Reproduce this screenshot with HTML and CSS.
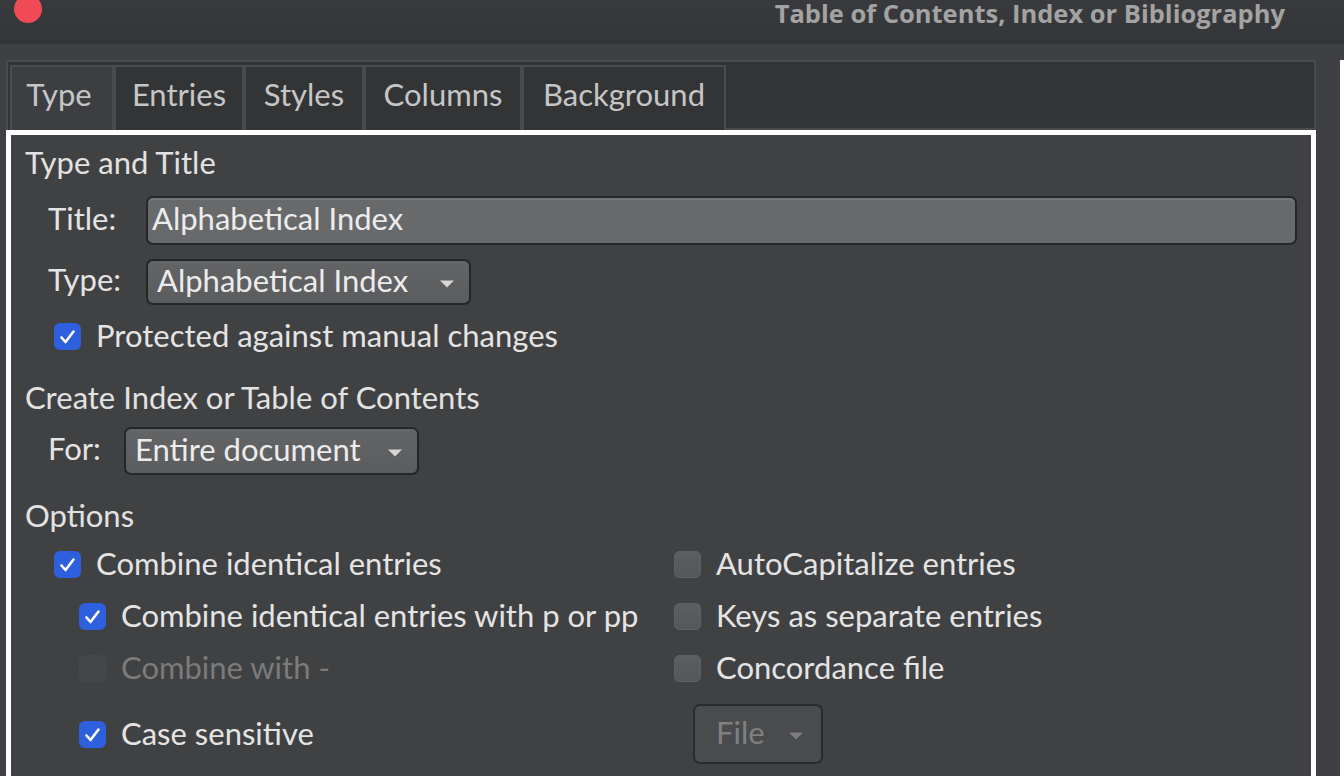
FILE: index.html
```html
<!DOCTYPE html>
<html>
<head>
<meta charset="utf-8">
<link rel="stylesheet" href="styles.css">
</head>
<body>
<div class="titlebar">
  <span class="close"></span>
  <span class="wintitle">Table of Contents, Index or Bibliography</span>
</div>
<div class="main">
  <div class="dialog">
    <div class="tabbar">
      <div class="tab tab-type active">Type</div>
      <div class="tab tab-entries">Entries</div>
      <div class="tab tab-styles">Styles</div>
      <div class="tab tab-columns">Columns</div>
      <div class="tab tab-bg">Background</div>
    </div>
    <div class="panel">
      <div class="heading h-type">Type and Title</div>
      <div class="formrow row-title">
        <span class="label label-wide">Title:</span>
        <div class="entry">Alphabetical Index</div>
      </div>
      <div class="formrow row-type">
        <span class="label label-wide">Type:</span>
        <div class="combo combo-type"><span>Alphabetical Index</span><svg class="arrow" width="16" height="8" viewBox="0 0 16 8"><path d="M1 0.5 H15 L8 7.5 Z" fill="#d6d6d6"/></svg></div>
      </div>
      <div class="check-row row-protect">
        <span class="cb checked"><svg width="27" height="27" viewBox="0 0 27 27"><path d="M7.5 14.5 L11.5 19 L19.5 8.5" fill="none" stroke="#fff" stroke-width="2.6" stroke-linecap="round" stroke-linejoin="round"/></svg></span>
        <span class="cb-text">Protected against manual changes</span>
      </div>
      <div class="heading h-create">Create Index or Table of Contents</div>
      <div class="formrow row-for">
        <span class="label label-narrow">For:</span>
        <div class="combo combo-for"><span>Entire document</span><svg class="arrow" width="16" height="8" viewBox="0 0 16 8"><path d="M1 0.5 H15 L8 7.5 Z" fill="#d6d6d6"/></svg></div>
      </div>
      <div class="heading h-options">Options</div>
      <div class="options">
        <div class="check-row">
          <span class="cb checked"><svg width="27" height="27" viewBox="0 0 27 27"><path d="M7.5 14.5 L11.5 19 L19.5 8.5" fill="none" stroke="#fff" stroke-width="2.6" stroke-linecap="round" stroke-linejoin="round"/></svg></span>
          <span class="cb-text">Combine identical entries</span>
        </div>
        <div class="check-row">
          <span class="cb"></span>
          <span class="cb-text">AutoCapitalize entries</span>
        </div>
        <div class="check-row sub">
          <span class="cb checked"><svg width="27" height="27" viewBox="0 0 27 27"><path d="M7.5 14.5 L11.5 19 L19.5 8.5" fill="none" stroke="#fff" stroke-width="2.6" stroke-linecap="round" stroke-linejoin="round"/></svg></span>
          <span class="cb-text">Combine identical entries with p or pp</span>
        </div>
        <div class="check-row">
          <span class="cb"></span>
          <span class="cb-text">Keys as separate entries</span>
        </div>
        <div class="check-row sub disabled">
          <span class="cb"></span>
          <span class="cb-text">Combine with -</span>
        </div>
        <div class="check-row">
          <span class="cb"></span>
          <span class="cb-text">Concordance file</span>
        </div>
        <div class="check-row sub">
          <span class="cb checked"><svg width="27" height="27" viewBox="0 0 27 27"><path d="M7.5 14.5 L11.5 19 L19.5 8.5" fill="none" stroke="#fff" stroke-width="2.6" stroke-linecap="round" stroke-linejoin="round"/></svg></span>
          <span class="cb-text">Case sensitive</span>
        </div>
        <div class="file-cell">
          <div class="combo combo-file"><span>File</span><svg class="arrow" width="16" height="8" viewBox="0 0 16 8"><path d="M1 0.5 H15 L8 7.5 Z" fill="#7c7d7f"/></svg></div>
        </div>
      </div>
    </div>
  </div>
  <div class="gutter"></div>
  <div class="edge"></div>
</div>
</body>
</html>
```

FILE: styles.css
```css
* { box-sizing: border-box; }
html, body {
  margin: 0;
  padding: 0;
  width: 1344px;
  height: 776px;
  overflow: hidden;
  background: #3f4043;
  font-family: Lato, "Open Sans", sans-serif;
  font-size: 31px;
  color: #e4e4e4;
}

.titlebar {
  height: 44px;
  background: linear-gradient(#393a3d, #343538);
  display: flex;
  align-items: flex-start;
  justify-content: space-between;
}
.close {
  width: 28px;
  height: 28px;
  margin-top: -5px;
  margin-left: 14px;
  border-radius: 50%;
  background: #f04a54;
}
.wintitle {
  font-family: "Open Sans", sans-serif;
  font-weight: 700;
  font-size: 25.5px;
  line-height: 27px;
  color: #a3a3a3;
  margin-right: 59px;
  margin-top: 0;
}

.main {
  display: flex;
  height: 732px;
}
.dialog {
  margin-left: 6px;
  width: 1310px;
  padding-top: 16px;
  display: flex;
  flex-direction: column;
}
.gutter { width: 24px; }
.edge {
  width: 4px;
  margin-top: 16px;
  background: #ffffff;
}

.tabbar {
  height: 70px;
  border: 2px solid #4a4b4d;
  border-bottom: none;
  background: #333436;
  padding: 3px 0 0 2px;
  display: flex;
}
.tabbar::after {
  content: "";
  flex: 1;
  border-bottom: 2px solid #4a4b4d;
}
.tab {
  border: 2px solid #4a4b4d;
  border-bottom: none;
  background: #333436;
  color: #c6c6c6;
  font-size: 31px;
  display: flex;
  align-items: center;
  justify-content: center;
  padding-bottom: 10px;
}
.tab.active { background: #3d3e41; }
.tab-type { width: 104px; padding-right: 6px; }
.tab-entries { width: 130px; }
.tab-styles { width: 120px; }
.tab-columns { width: 158px; }
.tab-bg { width: 204px; }

.panel {
  flex: 1;
  border: 5px solid #ffffff;
  border-bottom: none;
  background: #404143;
  padding: 11px 14px 0 14px;
}

.heading {
  height: 34px;
  line-height: 32px;
  color: #e2e2e2;
}
.h-create { margin-top: 29px; }
.h-options { margin-top: 24px; }

.formrow {
  display: flex;
  align-items: center;
  padding-left: 23px;
}
.row-title { margin-top: 16px; height: 49px; }
.row-type { margin-top: 14px; height: 46px; }
.row-for { margin-top: 12px; height: 48px; }

.label { flex: none; color: #e4e4e4; padding-bottom: 6px; }
.label-wide { width: 98px; }
.label-narrow { width: 76px; }

.entry {
  flex: 1;
  height: 49px;
  border: 2px solid #252628;
  border-radius: 7px;
  background: #68696b;
  box-shadow: inset 0 2px 0 #76777a;
  padding: 0 0 6px 4px;
  display: flex;
  align-items: center;
  color: #ececec;
}

.combo {
  height: 100%;
  border: 2px solid #252628;
  border-radius: 7px;
  background: linear-gradient(#636466, #5b5c5e);
  display: flex;
  align-items: center;
  justify-content: space-between;
  padding: 0 14px 5px 9px;
  color: #ececec;
}
.combo .arrow { flex: none; margin-top: 8px; }
.combo-type { width: 325px; }
.combo-for { width: 295px; }
.combo-file {
  width: 130px;
  height: 60px;
  background: #4a4b4d;
  color: #7f8082;
  padding: 0 17px 5px 21px;
  border-color: #2a2b2d;
}

.check-row {
  display: flex;
  align-items: center;
  height: 32px;
}
.row-protect { margin-top: 15px; padding-left: 29px; }
.cb {
  flex: none;
  width: 27px;
  height: 27px;
  border-radius: 6px;
  background: linear-gradient(#5d5e60, #555658);
  box-shadow: inset 0 0 0 1px #5f6062;
}
.cb svg { display: block; }
.cb.checked {
  background: #2e5fdc;
  box-shadow: none;
}
.cb-text { margin-left: 15px; padding-bottom: 3px; }
.check-row.sub { padding-left: 25px; }
.check-row.disabled .cb {
  background: #464749;
  box-shadow: none;
}
.check-row.disabled .cb-text { color: #7b7b7c; }

.options {
  margin-top: 15px;
  padding-left: 29px;
  display: grid;
  grid-template-columns: 620px 1fr;
  grid-template-rows: 32px 32px 32px 60px;
  row-gap: 20px;
}
.options > .check-row { height: auto; }
.file-cell {
  padding-left: 19px;
  display: flex;
  align-items: center;
}
```
